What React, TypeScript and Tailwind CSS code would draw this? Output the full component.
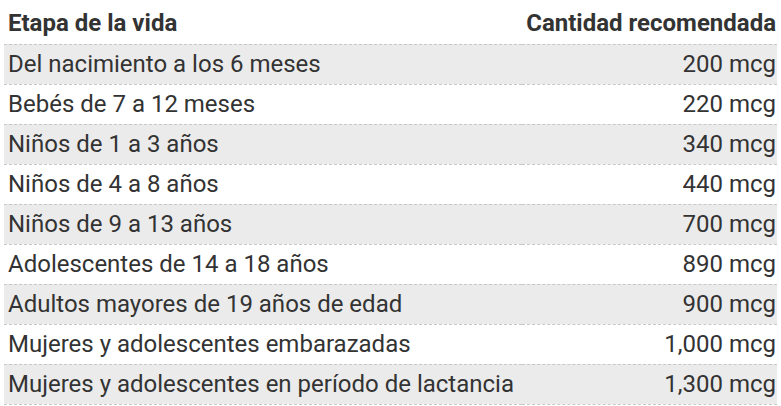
import React from "react";

const rows: [string, string][] = [
  ["Del nacimiento a los 6 meses", "200 mcg"],
  ["Bebés de 7 a 12 meses", "220 mcg"],
  ["Niños de 1 a 3 años", "340 mcg"],
  ["Niños de 4 a 8 años", "440 mcg"],
  ["Niños de 9 a 13 años", "700 mcg"],
  ["Adolescentes de 14 a 18 años", "890 mcg"],
  ["Adultos mayores de 19 años de edad", "900 mcg"],
  ["Mujeres y adolescentes embarazadas", "1,000 mcg"],
  ["Mujeres y adolescentes en período de lactancia", "1,300 mcg"],
];

export default function App() {
  return (
    <div className="bg-white w-[781px] h-[406px] pl-[4px] text-[#333333]" style={{ fontFamily: "Roboto, sans-serif" }}>
      <table className="w-[773px] border-collapse">
        <thead>
          <tr className="h-[44px] border-b border-dashed border-[#c8c8c8]">
            <th className="text-left font-bold text-[24px] leading-[28px] pl-[4px] pt-[2px] align-middle">Etapa de la vida</th>
            <th className="text-right font-bold text-[24px] leading-[28px] pr-[1px] pt-[2px] align-middle">Cantidad recomendada</th>
          </tr>
        </thead>
        <tbody>
          {rows.map(([a, b], i) => (
            <tr key={i} className={`h-[40px] border-b border-dashed border-[#c8c8c8] ${i % 2 === 0 ? "bg-[#ebebeb]" : "bg-white"}`}>
              <td className="text-left text-[24px] leading-[28px] pl-[4px] align-middle">{a}</td>
              <td className="text-right text-[24px] leading-[28px] pr-[1px] align-middle">{b}</td>
            </tr>
          ))}
        </tbody>
      </table>
    </div>
  );
}
